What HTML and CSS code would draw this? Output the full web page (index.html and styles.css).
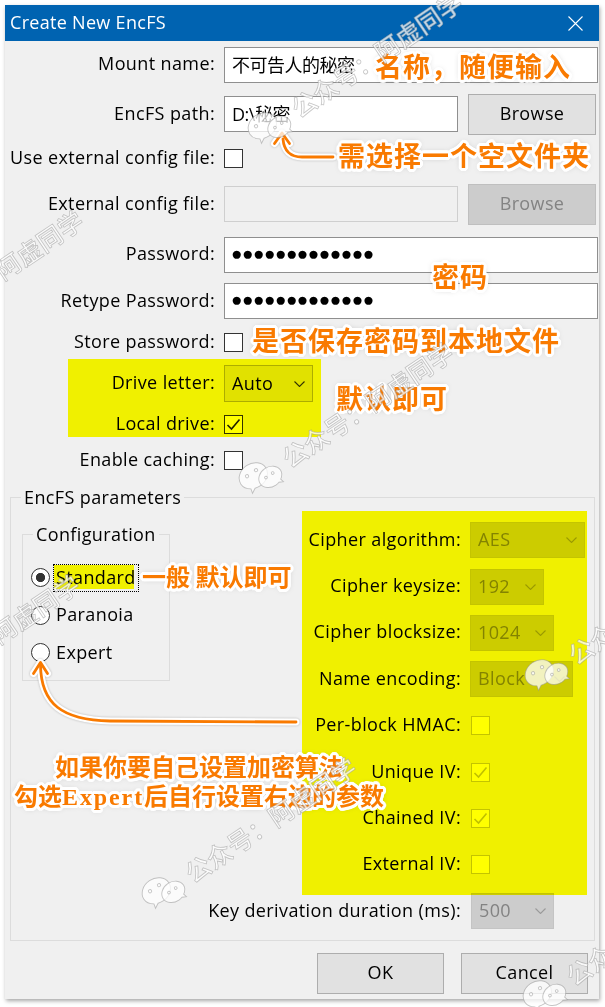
FILE: index.html
```html
<!DOCTYPE html>
<html lang="zh-CN">
<head>
<meta charset="utf-8">
<title>Create New EncFS</title>
<link rel="stylesheet" href="styles.css">
</head>
<body>
<div class="stage">
  <div class="window">
    <div class="titlebar">
      <span class="title">Create New EncFS</span>
      <svg class="close" viewBox="0 0 15 15" width="15" height="15"><path d="M0.5 0.5L14.5 14.5M14.5 0.5L0.5 14.5"/></svg>
    </div>

    <div class="form">
      <div class="label">Mount name:</div>
      <div class="field"><div class="input cjk">不可告人的秘密</div></div>

      <div class="label">EncFS path:</div>
      <div class="field"><div class="input short cjk">D:\秘密</div><div class="btn browse">Browse</div></div>

      <div class="label">Use external config file:</div>
      <div class="field"><span class="check"></span></div>

      <div class="label">External config file:</div>
      <div class="field"><div class="input short disabled"></div><div class="btn browse disabled">Browse</div></div>

      <div class="label">Password:</div>
      <div class="field"><div class="input pw">●●●●●●●●●●●●●</div></div>

      <div class="label">Retype Password:</div>
      <div class="field"><div class="input pw">●●●●●●●●●●●●●</div></div>

      <div class="label">Store password:</div>
      <div class="field"><span class="check"></span></div>

      <div class="label">Drive letter:</div>
      <div class="field"><div class="select drive"><span>Auto</span><svg class="chev" viewBox="0 0 11 6" width="11" height="6"><path d="M0.5 0.5L5.5 5.5L10.5 0.5"/></svg></div></div>

      <div class="label">Local drive:</div>
      <div class="field"><span class="check"><svg class="tick" viewBox="0 0 17 17" width="17" height="17"><path d="M2.5 9L6.5 13L14.5 3.5"/></svg></span></div>

      <div class="label">Enable caching:</div>
      <div class="field"><span class="check"></span></div>
    </div>

    <fieldset class="group params">
      <legend>EncFS parameters</legend>
      <div class="params-grid">
        <fieldset class="group config">
          <legend>Configuration</legend>
          <div class="radio-row"><span class="radio on"></span><span class="radio-label focused">Standard</span></div>
          <div class="radio-row"><span class="radio"></span><span class="radio-label">Paranoia</span></div>
          <div class="radio-row"><span class="radio"></span><span class="radio-label">Expert</span></div>
        </fieldset>

        <div class="plabel">Cipher algorithm:</div>
        <div class="pctl"><div class="select dis w-aes"><span>AES</span><svg class="chev" viewBox="0 0 11 6" width="11" height="6"><path d="M0.5 0.5L5.5 5.5L10.5 0.5"/></svg></div></div>

        <div class="plabel">Cipher keysize:</div>
        <div class="pctl"><div class="select dis w-key"><span>192</span><svg class="chev" viewBox="0 0 11 6" width="11" height="6"><path d="M0.5 0.5L5.5 5.5L10.5 0.5"/></svg></div></div>

        <div class="plabel">Cipher blocksize:</div>
        <div class="pctl"><div class="select dis w-block"><span>1024</span><svg class="chev" viewBox="0 0 11 6" width="11" height="6"><path d="M0.5 0.5L5.5 5.5L10.5 0.5"/></svg></div></div>

        <div class="plabel">Name encoding:</div>
        <div class="pctl"><div class="select dis w-name"><span>Block</span><svg class="chev" viewBox="0 0 11 6" width="11" height="6"><path d="M0.5 0.5L5.5 5.5L10.5 0.5"/></svg></div></div>

        <div class="plabel">Per-block HMAC:</div>
        <div class="pctl"><span class="check dis"></span></div>

        <div class="plabel">Unique IV:</div>
        <div class="pctl"><span class="check dis"><svg class="tick" viewBox="0 0 17 17" width="17" height="17"><path d="M2.5 9L6.5 13L14.5 3.5"/></svg></span></div>

        <div class="plabel">Chained IV:</div>
        <div class="pctl"><span class="check dis"><svg class="tick" viewBox="0 0 17 17" width="17" height="17"><path d="M2.5 9L6.5 13L14.5 3.5"/></svg></span></div>

        <div class="plabel">External IV:</div>
        <div class="pctl"><span class="check dis"></span></div>

        <div class="plabel kdf">Key derivation duration (ms):</div>
        <div class="pctl"><div class="select dis w-kdf"><span>500</span><svg class="chev" viewBox="0 0 11 6" width="11" height="6"><path d="M0.5 0.5L5.5 5.5L10.5 0.5"/></svg></div></div>
      </div>
    </fieldset>

    <div class="buttons">
      <div class="btn dlg">OK</div>
      <div class="btn dlg">Cancel</div>
    </div>
  </div>

  <!-- yellow highlighter marks -->
  <div class="hl hl-drive"></div>
  <div class="hl hl-cipher"></div>
  <div class="hl hl-standard"></div>

  <!-- arrows -->
  <svg class="arrows" width="605" height="1007" viewBox="0 0 605 1007">
    <g class="arrow-outline">
      <path d="M333 157L302 157C291 157 284 151 283 139"/>
      <path d="M274.5 143.5L282 133L289.5 143.5"/>
      <path d="M296 722L110 721C62 720 41 704 40.5 665"/>
      <path d="M33.5 673.5L40.5 662.5L47.5 673.5"/>
    </g>
    <g class="arrow-line">
      <path d="M333 157L302 157C291 157 284 151 283 139"/>
      <path d="M274.5 143.5L282 133L289.5 143.5"/>
      <path d="M296 722L110 721C62 720 41 704 40.5 665"/>
      <path d="M33.5 673.5L40.5 662.5L47.5 673.5"/>
    </g>
  </svg>

  <!-- annotations -->
  <div class="note n-name">名称，随便输入</div>
  <div class="note n-path">需选择一个空文件夹</div>
  <div class="note n-pw">密码</div>
  <div class="note n-store">是否保存密码到本地文件</div>
  <div class="note n-drive">默认即可</div>
  <div class="note small n-std">一般 默认即可</div>
  <div class="note small n-expert">如果你要自己设置加密算法<br>勾选<span class="latin">Expert</span>后自行设置右边的参数</div>

  <!-- watermarks -->
  <div class="wm wm1"><svg class="wx" viewBox="0 0 50 42" width="46" height="38"><path d="M19 3C10 3 2.5 9 2.5 16.5C2.5 20.8 5 24.5 8.8 27L7.5 32L13 29C14.9 29.6 16.9 30 19 30C28 30 35.5 24 35.5 16.5C35.5 9 28 3 19 3Z"/><path d="M34 17C26.5 17 20.5 22 20.5 28C20.5 34 26.5 39 34 39C35.6 39 37.1 38.8 38.5 38.3L43 40.5L42 36.5C45.2 34.5 47.5 31.5 47.5 28C47.5 22 41.5 17 34 17Z"/><circle cx="13" cy="13" r="1.8"/><circle cx="25" cy="13" r="1.8"/><circle cx="29.5" cy="26" r="1.5"/><circle cx="38.5" cy="26" r="1.5"/></svg><span>公众号：阿虚同学</span></div>
  <div class="wm wm2"><svg class="wx" viewBox="0 0 50 42" width="46" height="38"><path d="M19 3C10 3 2.5 9 2.5 16.5C2.5 20.8 5 24.5 8.8 27L7.5 32L13 29C14.9 29.6 16.9 30 19 30C28 30 35.5 24 35.5 16.5C35.5 9 28 3 19 3Z"/><path d="M34 17C26.5 17 20.5 22 20.5 28C20.5 34 26.5 39 34 39C35.6 39 37.1 38.8 38.5 38.3L43 40.5L42 36.5C45.2 34.5 47.5 31.5 47.5 28C47.5 22 41.5 17 34 17Z"/><circle cx="13" cy="13" r="1.8"/><circle cx="25" cy="13" r="1.8"/><circle cx="29.5" cy="26" r="1.5"/><circle cx="38.5" cy="26" r="1.5"/></svg><span>公众号：阿虚同学</span></div>
  <div class="wm wm3"><svg class="wx" viewBox="0 0 50 42" width="46" height="38"><path d="M19 3C10 3 2.5 9 2.5 16.5C2.5 20.8 5 24.5 8.8 27L7.5 32L13 29C14.9 29.6 16.9 30 19 30C28 30 35.5 24 35.5 16.5C35.5 9 28 3 19 3Z"/><path d="M34 17C26.5 17 20.5 22 20.5 28C20.5 34 26.5 39 34 39C35.6 39 37.1 38.8 38.5 38.3L43 40.5L42 36.5C45.2 34.5 47.5 31.5 47.5 28C47.5 22 41.5 17 34 17Z"/><circle cx="13" cy="13" r="1.8"/><circle cx="25" cy="13" r="1.8"/><circle cx="29.5" cy="26" r="1.5"/><circle cx="38.5" cy="26" r="1.5"/></svg><span>公众号：阿虚同学</span></div>
  <div class="wm wm4"><svg class="wx" viewBox="0 0 50 42" width="46" height="38"><path d="M19 3C10 3 2.5 9 2.5 16.5C2.5 20.8 5 24.5 8.8 27L7.5 32L13 29C14.9 29.6 16.9 30 19 30C28 30 35.5 24 35.5 16.5C35.5 9 28 3 19 3Z"/><path d="M34 17C26.5 17 20.5 22 20.5 28C20.5 34 26.5 39 34 39C35.6 39 37.1 38.8 38.5 38.3L43 40.5L42 36.5C45.2 34.5 47.5 31.5 47.5 28C47.5 22 41.5 17 34 17Z"/><circle cx="13" cy="13" r="1.8"/><circle cx="25" cy="13" r="1.8"/><circle cx="29.5" cy="26" r="1.5"/><circle cx="38.5" cy="26" r="1.5"/></svg><span>公众号：阿虚同学</span></div>
  <div class="wm wm5"><svg class="wx" viewBox="0 0 50 42" width="46" height="38"><path d="M19 3C10 3 2.5 9 2.5 16.5C2.5 20.8 5 24.5 8.8 27L7.5 32L13 29C14.9 29.6 16.9 30 19 30C28 30 35.5 24 35.5 16.5C35.5 9 28 3 19 3Z"/><path d="M34 17C26.5 17 20.5 22 20.5 28C20.5 34 26.5 39 34 39C35.6 39 37.1 38.8 38.5 38.3L43 40.5L42 36.5C45.2 34.5 47.5 31.5 47.5 28C47.5 22 41.5 17 34 17Z"/><circle cx="13" cy="13" r="1.8"/><circle cx="25" cy="13" r="1.8"/><circle cx="29.5" cy="26" r="1.5"/><circle cx="38.5" cy="26" r="1.5"/></svg><span>公众号：阿虚同学</span></div>
  <div class="wm wm6"><svg class="wx" viewBox="0 0 50 42" width="46" height="38"><path d="M19 3C10 3 2.5 9 2.5 16.5C2.5 20.8 5 24.5 8.8 27L7.5 32L13 29C14.9 29.6 16.9 30 19 30C28 30 35.5 24 35.5 16.5C35.5 9 28 3 19 3Z"/><path d="M34 17C26.5 17 20.5 22 20.5 28C20.5 34 26.5 39 34 39C35.6 39 37.1 38.8 38.5 38.3L43 40.5L42 36.5C45.2 34.5 47.5 31.5 47.5 28C47.5 22 41.5 17 34 17Z"/><circle cx="13" cy="13" r="1.8"/><circle cx="25" cy="13" r="1.8"/><circle cx="29.5" cy="26" r="1.5"/><circle cx="38.5" cy="26" r="1.5"/></svg><span>公众号：阿虚同学</span></div>
  <div class="wm wm7"><svg class="wx" viewBox="0 0 50 42" width="46" height="38"><path d="M19 3C10 3 2.5 9 2.5 16.5C2.5 20.8 5 24.5 8.8 27L7.5 32L13 29C14.9 29.6 16.9 30 19 30C28 30 35.5 24 35.5 16.5C35.5 9 28 3 19 3Z"/><path d="M34 17C26.5 17 20.5 22 20.5 28C20.5 34 26.5 39 34 39C35.6 39 37.1 38.8 38.5 38.3L43 40.5L42 36.5C45.2 34.5 47.5 31.5 47.5 28C47.5 22 41.5 17 34 17Z"/><circle cx="13" cy="13" r="1.8"/><circle cx="25" cy="13" r="1.8"/><circle cx="29.5" cy="26" r="1.5"/><circle cx="38.5" cy="26" r="1.5"/></svg><span>公众号：阿虚同学</span></div>
</div>
</body>
</html>
```

FILE: styles.css
```css
* { box-sizing: border-box; }

html, body {
  margin: 0;
  padding: 0;
  background: #ffffff;
}

.stage {
  position: relative;
  width: 605px;
  height: 1007px;
  overflow: hidden;
  font-family: "Open Sans", "Noto Sans CJK SC", sans-serif;
  font-size: 18px;
  letter-spacing: 0.38px;
  color: #000;
}

/* ---------- window ---------- */
.window {
  margin: 5px 0 0 5px;
  width: 594px;
  height: 994px;
  background: #f0f0f0;
  box-shadow: 1px 2px 4px rgba(0, 0, 0, 0.35);
  display: flex;
  flex-direction: column;
}

.titlebar {
  flex: 0 0 36px;
  background: #0063b1;
  color: #fff;
  display: flex;
  align-items: center;
  justify-content: space-between;
  padding: 0 16px 3px 5px;
}

.title { font-size: 18px; letter-spacing: 0.3px; }

.close {
  fill: none;
  stroke: #fff;
  stroke-width: 1.1;
  margin-top: 3px;
}

/* ---------- top form ---------- */
.form {
  display: grid;
  grid-template-columns: 205px 1fr;
  column-gap: 9px;
  grid-template-rows: 47px 52px 37px 54px 47px 46px 36px 47px 35px 37px;
  align-items: center;
  padding: 0 1px 0 5px;
}

.label {
  text-align: right;
  white-space: nowrap;
  padding-bottom: 3px;
}

.field {
  display: flex;
  align-items: center;
  gap: 10px;
}

.input {
  flex: 1;
  height: 36px;
  border: 1px solid #8f8f8f;
  background: #fff;
  padding: 0 7px 2px;
  display: flex;
  align-items: center;
  white-space: nowrap;
}

.input.cjk { letter-spacing: -0.5px; }

.input.short { flex: 0 0 234px; }

.input.disabled {
  background: #f0f0f0;
  border-color: #cfcfcf;
}

.input.pw {
  font-family: "Liberation Sans", sans-serif;
  font-size: 19px;
  letter-spacing: -0.5px;
  padding-left: 6px;
}

.btn {
  height: 41px;
  border: 1px solid #adadad;
  background: #e1e1e1;
  display: flex;
  align-items: center;
  justify-content: center;
  padding-bottom: 2px;
}

.btn.browse {
  flex: 1;
  margin-right: 2px;
}

.btn.disabled {
  background: #cccccc;
  border-color: #bfbfbf;
  color: #838383;
}

.check {
  width: 19px;
  height: 19px;
  border: 1px solid #333;
  background: #fff;
  display: inline-flex;
}

.check.dis {
  border-color: #c4c4c4;
  margin-left: 1px;
}

.tick {
  fill: none;
  stroke: #222;
  stroke-width: 1.6;
}

.check.dis .tick { stroke: #c0c0c0; }

.select {
  height: 36px;
  border: 1px solid #adadad;
  background: #e1e1e1;
  display: flex;
  align-items: center;
  justify-content: space-between;
  padding: 0 7px 2px 7px;
  white-space: nowrap;
  overflow: hidden;
}

.select.drive { width: 89px; height: 37px; }

.chev {
  flex: 0 0 auto;
  fill: none;
  stroke: #333;
  stroke-width: 1.1;
  margin-top: 2px;
}

.select.dis {
  background: #cccccc;
  border-color: #c4c4c4;
  color: #838383;
}

.select.dis .chev { stroke: #9a9a9a; }

.w-aes { width: 115px; }
.w-key { width: 74px; }
.w-block { width: 84px; }
.w-name { width: 103px; }
.w-kdf { width: 83px; margin-left: 1px; }

/* ---------- group boxes ---------- */
.group {
  margin: 0;
  padding: 0;
  border: 1px solid #dcdcdc;
  min-width: 0;
}

.group > legend {
  margin-left: 10px;
  padding: 0 3px;
  line-height: 22px;
}

.params {
  margin: 7px 4px 0 5px;
  padding-bottom: 5px;
}

.params-grid {
  display: grid;
  grid-template-columns: 151px 290px 1fr;
  column-gap: 9px;
  grid-auto-rows: 46.4px;
  align-items: center;
  padding-top: 9px;
}

.config {
  grid-column: 1;
  grid-row: 1 / span 4;
  align-self: start;
  margin: 6px 0 0 11px;
  width: 148px;
  padding: 14px 0 8px 0;
}

.radio-row {
  height: 37.5px;
  display: flex;
  align-items: center;
  padding-left: 8px;
}

.radio {
  width: 19px;
  height: 19px;
  border-radius: 50%;
  border: 1px solid #333;
  background: #fff;
}

.radio.on {
  background: radial-gradient(circle, #333 0 4.3px, #fff 4.9px);
}

.radio-label {
  margin-left: 6px;
  line-height: 24px;
  padding-bottom: 2px;
}

.radio-label.focused {
  margin-left: 4px;
  padding: 0 2px 2px;
  outline: 1px dotted #000;
  outline-offset: 0;
}

.plabel {
  grid-column: 2;
  justify-self: end;
  white-space: nowrap;
  padding-bottom: 3px;
}

.plabel.kdf { grid-column: 1 / 3; }

.pctl {
  grid-column: 3;
  display: flex;
  align-items: center;
}

.buttons {
  display: flex;
  justify-content: flex-end;
  gap: 17px;
  margin-top: 12px;
  padding-right: 11px;
}

.btn.dlg {
  width: 127px;
}

/* ---------- highlighter overlays ---------- */
.hl {
  position: absolute;
  background: #ffff00;
  mix-blend-mode: multiply;
}

.hl-drive { left: 68px; top: 359px; width: 253px; height: 78px; }
.hl-cipher { left: 302px; top: 511px; width: 285px; height: 384px; }
.hl-standard { left: 54px; top: 565px; width: 80px; height: 24px; }

/* ---------- arrows ---------- */
.arrows {
  position: absolute;
  left: 0;
  top: 0;
  pointer-events: none;
  filter: drop-shadow(0 0 1px rgba(0, 0, 0, 0.25));
}

.arrows path {
  fill: none;
  stroke-linecap: round;
  stroke-linejoin: round;
}

.arrow-outline path { stroke: #fff; stroke-width: 7; }
.arrow-line path { stroke: #f97a00; stroke-width: 2.8; }

/* ---------- annotations ---------- */
.note {
  position: absolute;
  font-family: "Noto Sans CJK SC", sans-serif;
  font-weight: 700;
  font-size: 27px;
  letter-spacing: 1px;
  line-height: 1;
  color: #f97a00;
  white-space: nowrap;
  text-shadow:
    3px 0 #fff, 2.8px 1.1px #fff, 2.1px 2.1px #fff, 1.1px 2.8px #fff,
    0 3px #fff, -1.1px 2.8px #fff, -2.1px 2.1px #fff, -2.8px 1.1px #fff,
    -3px 0 #fff, -2.8px -1.1px #fff, -2.1px -2.1px #fff, -1.1px -2.8px #fff,
    0 -3px #fff, 1.1px -2.8px #fff, 2.1px -2.1px #fff, 2.8px -1.1px #fff,
    0 0 6px rgba(0, 0, 0, 0.35);
}

.note.small {
  font-size: 24px;
  letter-spacing: 0;
}

.n-name { left: 375px; top: 52px; }
.n-path { left: 338px; top: 141px; }
.n-pw { left: 432px; top: 262px; }
.n-store { left: 252px; top: 326px; }
.n-drive { left: 336px; top: 384px; }
.n-std { left: 142px; top: 564px; }

.n-expert {
  left: 0;
  top: 751px;
  width: 398px;
  text-align: center;
  line-height: 29px;
}

.n-expert .latin {
  font-family: "Liberation Serif", serif;
  letter-spacing: 1.9px;
}

/* ---------- watermarks ---------- */
.wm {
  position: absolute;
  display: flex;
  align-items: center;
  gap: 6px;
  height: 42px;
  transform: rotate(-34deg);
  transform-origin: 0 50%;
  font-family: "Noto Sans CJK SC", sans-serif;
  font-size: 25px;
  font-weight: 500;
  letter-spacing: 0;
  color: rgba(255, 255, 255, 0.75);
  -webkit-text-stroke: 0.8px rgba(150, 150, 150, 0.55);
  white-space: nowrap;
  pointer-events: none;
}

.wx {
  fill: rgba(255, 255, 255, 0.75);
  stroke: rgba(150, 150, 150, 0.55);
  stroke-width: 1;
}

.wm1 { left: 250px; top: 118px; }
.wm2 { left: 241px; top: 468px; }
.wm3 { left: -129px; top: 336px; }
.wm4 { left: -133px; top: 700px; }
.wm5 { left: 527px; top: 665px; }
.wm6 { left: 144px; top: 883px; }
.wm7 { left: 525px; top: 986px; }
```
